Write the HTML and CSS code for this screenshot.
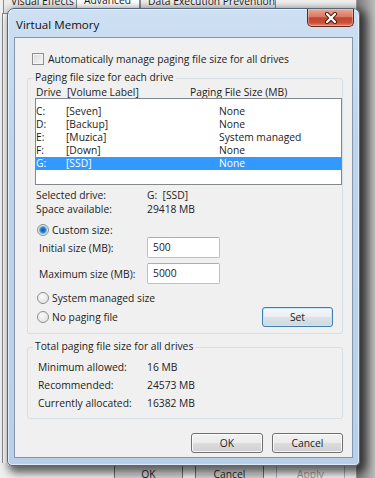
FILE: index.html
```html
<!DOCTYPE html>
<html>
<head>
  <link rel="stylesheet" href="styles.css">
</head>
<body>
  <div class="backdrop">
    <div class="parent-window">
      <div class="tabs">
        <div class="tab tab-visual">Visual Effects</div>
        <div class="tab tab-advanced active">Advanced</div>
        <div class="tab tab-dep">Data Execution Prevention</div>
      </div>
      <div class="page"></div>
      <div class="parent-buttons">
        <div class="pbtn">OK</div>
        <div class="pbtn">Cancel</div>
        <div class="pbtn disabled">Apply</div>
      </div>
    </div>
    <div class="outside"></div>
  </div>

  <div class="dialog">
    <div class="titlebar">
      <div class="title">Virtual Memory</div>
      <div class="close">
        <svg width="14" height="12" viewBox="0 0 14 12">
          <path d="M3 2 L11 10 M11 2 L3 10" stroke="#4a1d14" stroke-width="4.2" stroke-linecap="round"/>
          <path d="M3 2 L11 10 M11 2 L3 10" stroke="#fff" stroke-width="2.2" stroke-linecap="round"/>
        </svg>
      </div>
    </div>

    <div class="client">
      <div class="check-row">
        <span class="checkbox"></span>
        <span>Automatically manage paging file size for all drives</span>
      </div>

      <div class="group group-drives">
        <div class="group-title">Paging file size for each drive</div>
        <div class="list-head">
          <span class="head-drive">Drive</span>
          <span class="head-label">[Volume Label]</span>
          <span>Paging File Size (MB)</span>
        </div>
        <div class="listbox">
          <div class="row"><span class="col-drive">C:</span><span class="col-label">[Seven]</span><span>None</span></div>
          <div class="row"><span class="col-drive">D:</span><span class="col-label">[Backup]</span><span>None</span></div>
          <div class="row"><span class="col-drive">E:</span><span class="col-label">[Muzica]</span><span>System managed</span></div>
          <div class="row"><span class="col-drive">F:</span><span class="col-label">[Down]</span><span>None</span></div>
          <div class="row selected"><span class="col-drive">G:</span><span class="col-label">[SSD]</span><span>None</span></div>
        </div>

        <div class="info info-first">
          <span class="info-key">Selected drive:</span><span>G:&nbsp; [SSD]</span>
        </div>
        <div class="info">
          <span class="info-key">Space available:</span><span>29418 MB</span>
        </div>

        <div class="radio-row radio-custom">
          <span class="radio checked"></span><span>Custom size:</span>
        </div>
        <div class="size-row">
          <span class="size-key">Initial size (MB):</span>
          <div class="input">500</div>
        </div>
        <div class="size-row size-max">
          <span class="size-key">Maximum size (MB):</span>
          <div class="input">5000</div>
        </div>
        <div class="radio-row radio-system">
          <span class="radio"></span><span>System managed size</span>
        </div>
        <div class="nopaging-row">
          <div class="radio-label">
            <span class="radio"></span><span>No paging file</span>
          </div>
          <div class="button button-set">Set</div>
        </div>
      </div>

      <div class="group group-total">
        <div class="group-title">Total paging file size for all drives</div>
        <div class="total-rows">
          <div class="total"><span class="total-key">Minimum allowed:</span><span>16 MB</span></div>
          <div class="total"><span class="total-key">Recommended:</span><span>24573 MB</span></div>
          <div class="total"><span class="total-key">Currently allocated:</span><span>16382 MB</span></div>
        </div>
      </div>

      <div class="dialog-buttons">
        <div class="button button-ok">OK</div>
        <div class="button button-cancel">Cancel</div>
      </div>
    </div>
  </div>
</body>
</html>
```

FILE: styles.css
```css
:root {
  --text: #1c1c1c;
  --face: #f0f0f0;
  --group-line: #d5dfe5;
  --select: #3399ff;
}

* {
  box-sizing: border-box;
}

body {
  margin: 0;
  width: 375px;
  height: 478px;
  overflow: hidden;
  position: relative;
  font-family: "Open Sans", "Noto Sans", sans-serif;
  font-size: 10.3px;
  color: var(--text);
  background: #d4d4d4;
}

/* parent window behind the dialog */
.backdrop {
  height: 478px;
  display: flex;
}

.parent-window {
  width: 357px;
  display: flex;
  flex-direction: column;
  background: #f0f0f0;
  border-right: 1px solid #9a9a9a;
}

.tabs {
  height: 13px;
  display: flex;
  align-items: flex-end;
  padding-left: 3px;
}

.tab {
  height: 20px;
  padding: 0 0 0 7px;
  line-height: 14px;
  white-space: nowrap;
  overflow: hidden;
  border: 1px solid #898c95;
  border-bottom: none;
  background: linear-gradient(#f3f3f3, #e3e3e3);
}

.tab-visual { width: 74px; }
.tab-dep { width: 136px; }

.tab-advanced {
  width: 63px;
  height: 22px;
  padding-top: 1px;
  background: #fff;
  border-left: none;
}

.page {
  flex: 1;
  margin-left: 2px;
  border-left: 1px solid #898c95;
  border-top: 1px solid #898c95;
  background: #fff;
}

.parent-buttons {
  height: 23px;
  margin-bottom: -8px;
  display: flex;
  justify-content: flex-end;
  gap: 12px;
  padding-right: 11px;
  background: #f0f0f0;
}

.pbtn {
  width: 69px;
  height: 23px;
  line-height: 21px;
  text-align: center;
  border: 1px solid #707070;
  border-radius: 3px;
  background: linear-gradient(#f2f2f2, #e6e6e6 50%, #d8d8d8 50%, #cfcfcf);
}

.pbtn.disabled {
  color: #9a9a9a;
  border-color: #adb2b5;
  background: #f4f4f4;
}

.outside {
  flex: 1;
  background: linear-gradient(90deg, #7c7c7c, #bcbcbc);
}

/* the Virtual Memory dialog */
.dialog {
  position: absolute;
  left: 7px;
  top: 8px;
  width: 353px;
  height: 458px;
  padding: 0 6px 7px;
  display: flex;
  flex-direction: column;
  border: 1px solid #54687c;
  border-radius: 7px 7px 5px 5px;
  background: linear-gradient(#cde0f3, #bed4ec 30%, #b9d0ea);
  box-shadow: inset 0 0 0 1px rgba(255, 255, 255, 0.55), 4px 4px 9px 3px rgba(0, 0, 0, 0.6);
}

.titlebar {
  height: 28px;
  display: flex;
  justify-content: space-between;
  align-items: flex-start;
}

.title {
  margin: 9px 0 0 2px;
  font-size: 11.6px;
  line-height: 14px;
  color: #111;
}

.close {
  width: 47px;
  height: 18px;
  margin-right: -1px;
  display: flex;
  align-items: center;
  justify-content: center;
  border: 1px solid #6a2418;
  border-top: none;
  border-radius: 0 0 5px 5px;
  background: linear-gradient(#e9a796, #d87a64 45%, #c4442b 52%, #c9503a 80%, #dc8a73);
  box-shadow: inset 0 0 0 1px rgba(255, 210, 200, 0.45);
}

.client {
  flex: 1;
  display: flex;
  flex-direction: column;
  border: 1px solid #8297ad;
  background: var(--face);
}

.check-row {
  margin-top: 13px;
  height: 16px;
  padding-left: 17px;
  display: flex;
  align-items: center;
  gap: 4px;
}

.checkbox {
  width: 12px;
  height: 12px;
  border: 1px solid #8e8f8f;
  background: linear-gradient(135deg, #d9d9d9, #f7f7f7);
  box-shadow: inset 0 0 0 1px #f4f4f4;
}

.group {
  margin-left: 12px;
  width: 316px;
  display: flex;
  flex-direction: column;
  border: 1px solid var(--group-line);
  border-radius: 3px;
}

.group-title {
  align-self: flex-start;
  margin: -9px 0 0 5px;
  padding: 0 2px;
  line-height: 14px;
  background: var(--face);
}

.group-drives {
  margin-top: 11px;
  padding-bottom: 6px;
}

.list-head {
  margin-top: 2px;
  height: 12px;
  line-height: 12px;
  padding-left: 8px;
  display: flex;
}

.head-drive { width: 31px; }
.head-label { width: 123px; }

.listbox {
  margin-left: 7px;
  width: 307px;
  height: 87px;
  padding-top: 6px;
  border: 1px solid #828790;
  background: #fff;
}

.row {
  height: 13px;
  line-height: 13px;
  display: flex;
}

.row.selected {
  background: var(--select);
  color: #fff;
}

.col-drive { width: 30px; }
.col-label { width: 153px; }

.info {
  height: 14px;
  line-height: 14px;
  padding-left: 8px;
  display: flex;
}

.info-first {
  margin-top: 3px;
}

.info-key { width: 111px; }

.radio-row,
.radio-label {
  height: 14px;
  padding-left: 9px;
  display: flex;
  align-items: center;
  gap: 3px;
}

.radio-custom { margin-top: 7px; }
.radio-system { margin-top: 7px; }

.radio {
  width: 12px;
  height: 12px;
  border-radius: 50%;
  border: 1px solid #8e8f8f;
  background: radial-gradient(circle at 40% 35%, #fafafa, #dcdcdc);
}

.radio.checked {
  background: radial-gradient(circle, #0d4f8f 0, #2a86d3 2.5px, #6bb4ea 3.5px, #e4e4e4 4.5px, #f4f4f4);
}

.size-row {
  height: 21px;
  padding-left: 11px;
  display: flex;
  align-items: center;
}

.size-max { margin-top: 5px; }

.size-key { width: 108px; }

.input {
  width: 73px;
  height: 21px;
  padding-left: 5px;
  line-height: 18px;
  border: 1px solid #b5c2cf;
  border-top-color: #abadb3;
  border-radius: 2px;
  background: #fff;
}

.nopaging-row {
  margin-top: 2px;
  height: 20px;
  padding-right: 9px;
  display: flex;
  align-items: center;
  justify-content: space-between;
}

.button {
  height: 20px;
  line-height: 18px;
  text-align: center;
  border: 1px solid #707070;
  border-radius: 3px;
  background: linear-gradient(#f2f2f2, #ebebeb 50%, #dddddd 50%, #cfcfcf);
  box-shadow: inset 0 0 0 1px rgba(255, 255, 255, 0.8);
}

.button-set {
  width: 71px;
  border-color: #3c7fb1;
  background: linear-gradient(#f4f8fb, #e9eef2 50%, #dbe2e8 50%, #d0d9e0);
  box-shadow: inset 0 0 0 1px #c6e6fa;
}

.group-total {
  margin-top: 13px;
  padding-bottom: 6px;
}

.total-rows {
  margin-top: 5px;
  padding-left: 10px;
}

.total {
  height: 18px;
  line-height: 18px;
  display: flex;
}

.total-key { width: 109px; }

.dialog-buttons {
  margin-top: 14px;
  padding-right: 9px;
  display: flex;
  justify-content: flex-end;
  gap: 9px;
}

.button-ok { width: 72px; }
.button-cancel { width: 71px; }
```
